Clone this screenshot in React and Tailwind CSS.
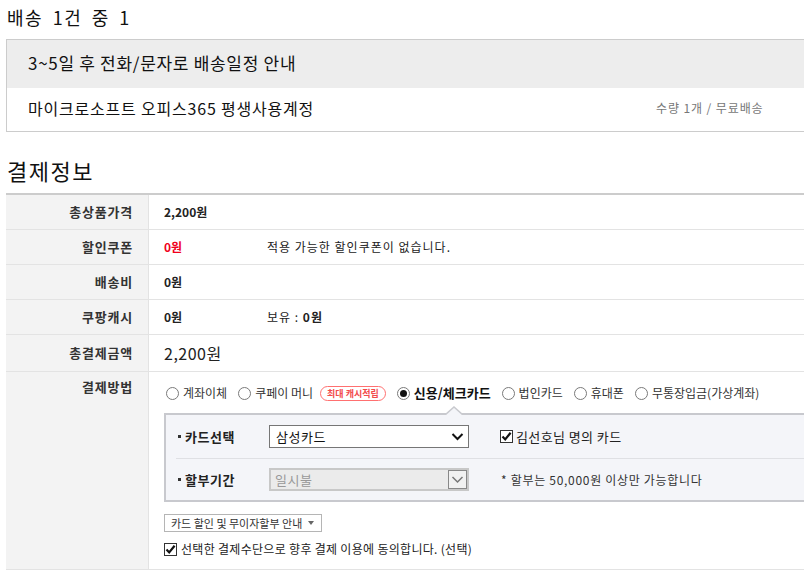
import React from 'react';

const font = { fontFamily: '"Noto Sans CJK KR", "Noto Sans", sans-serif' };

function Radio({ checked }) {
    return (
        <span className="w-[13px] h-[13px] rounded-full border border-[#7a7a7a] bg-white flex items-center justify-center shrink-0">
            {checked && <span className="w-[7px] h-[7px] rounded-full bg-[#111]" />}
        </span>
    );
}

function CheckBox() {
    return (
        <span className="w-[13px] h-[13px] border border-[#333] bg-white flex items-center justify-center shrink-0">
            <svg width="11" height="11" viewBox="0 0 11 11">
                <path d="M1.5 5.5 L4.2 8.4 L9.6 1.8" fill="none" stroke="#111" strokeWidth="2.2" />
            </svg>
        </span>
    );
}

function Chevron({ color = '#111', width = 2 }) {
    return (
        <svg width="13" height="9" viewBox="0 0 13 9">
            <path d="M1.5 2 L6.5 7 L11.5 2" fill="none" stroke={color} strokeWidth={width} />
        </svg>
    );
}

const rows = [
    { label: '총상품가격', value: <span className="font-bold">2,200원</span> },
    {
        label: '할인쿠폰',
        value: <span className="font-bold text-[#f0001c]">0원</span>,
        extra: <span className="tracking-[1px]">적용 가능한 할인쿠폰이 없습니다.</span>,
    },
    { label: '배송비', value: <span className="font-bold">0원</span> },
    {
        label: '쿠팡캐시',
        value: <span className="font-bold">0원</span>,
        extra: <span className="tracking-[1px]">보유 : <b>0원</b></span>,
    },
];

const labelCls = 'w-[143px] bg-[#f3f3f3] border-r border-[#e3e3e3] flex justify-end pr-[15px] text-[13px] font-bold text-[#333] tracking-[0.8px]';

export default function App() {
    const methods = [
        { name: '계좌이체' },
        { name: '쿠페이 머니', badge: true },
        { name: '신용/체크카드', checked: true },
        { name: '법인카드' },
        { name: '휴대폰' },
        { name: '무통장입금(가상계좌)' },
    ];

    return (
        <div className="w-[804px] h-[580px] overflow-hidden bg-white text-[#222]" style={font}>
            <div className="w-[840px]">
                <h2 className="h-[39px] pl-[7px] pt-[5px] text-[18px] leading-[24px] font-normal text-[#111] tracking-[1.5px] [word-spacing:4px]">배송 1건 중 1</h2>

                <div className="ml-[6px] border border-[#cccccc]">
                    <div className="h-[48px] bg-[#ededed] pl-[21px] pb-[3px] flex items-center text-[17px] text-[#111] tracking-[0.7px]">
                        3~5일 후 전화/문자로 배송일정 안내
                    </div>
                    <div className="h-[43px] pl-[21px] pb-[4px] flex items-center">
                        <span className="w-[628px] text-[16px] text-[#111] tracking-[0.8px]">마이크로소프트 오피스365 평생사용계정</span>
                        <span className="text-[12px] text-[#777] tracking-[0.9px]">수량 1개 / 무료배송</span>
                    </div>
                </div>

                <h2 className="h-[61px] pl-[7px] pt-[24px] text-[22px] leading-[28px] font-normal text-[#111] tracking-[1.5px]">결제정보</h2>

                <div className="ml-[6px] border-t-2 border-[#cccccc] text-[12px]">
                    {rows.map((r) => (
                        <div key={r.label} className="flex h-[35px] border-b border-[#e3e3e3]">
                            <div className={labelCls + ' items-center'}>{r.label}</div>
                            <div className="flex items-center pl-[15px]">
                                <span className="w-[103px]">{r.value}</span>
                                {r.extra}
                            </div>
                        </div>
                    ))}
                    <div className="flex h-[37px] border-b border-[#e3e3e3]">
                        <div className={labelCls + ' items-center'}>총결제금액</div>
                        <div className="flex items-center pl-[15px] text-[16px] text-[#222] tracking-[0.5px]">2,200원</div>
                    </div>

                    <div className="flex h-[198px] border-b border-[#e3e3e3]">
                        <div className={labelCls + ' pt-[6px] leading-[18px]'}>결제방법</div>
                        <div className="flex-1 pl-[15px]">
                            <div className="mt-[13px] h-[16px] flex items-center pl-[2px]">
                                {methods.map((m) => (
                                    <label key={m.name} className="flex items-center gap-[4px] mr-[11px]">
                                        <Radio checked={m.checked} />
                                        <span className={m.checked ? 'font-bold text-[13px] text-[#111]' : 'text-[12px] text-[#333]'}>{m.name}</span>
                                        {m.badge && (
                                            <span className="ml-[3px] h-[15px] px-[6px] rounded-full border border-[#ff7070] text-[#f24b4b] text-[9px] font-bold flex items-center leading-none">
                                                최대 캐시적립
                                            </span>
                                        )}
                                    </label>
                                ))}
                            </div>

                            <div className="relative mt-[12px] border-y-2 border-l-2 border-[#c8c9ce] bg-[#f4f5f9]">
                                <svg className="absolute left-[279px] -top-[9px]" width="18" height="9" viewBox="0 0 18 9">
                                    <path d="M0 9 L9 1 L18 9" fill="#f4f5f9" stroke="#c8c9ce" strokeWidth="1.5" />
                                </svg>
                                <div className="h-[43px] flex items-center pl-[12px]">
                                    <span className="w-[3px] h-[3px] bg-[#333] mr-[4px]" />
                                    <span className="w-[84px] text-[13px] font-bold text-[#222] tracking-[0.5px]">카드선택</span>
                                    <div className="w-[200px] h-[23px] border border-[#767676] bg-white flex items-center justify-between pl-[6px] pr-[4px]">
                                        <span className="text-[13px] text-[#111] tracking-[0.5px]">삼성카드</span>
                                        <Chevron />
                                    </div>
                                    <span className="ml-[31px] flex items-center gap-[3px]">
                                        <CheckBox />
                                        <span className="text-[13px] text-[#222] tracking-[0.4px]">김선호님 명의 카드</span>
                                    </span>
                                </div>
                                <div className="ml-[10px] h-px bg-[#dfe0e4]" />
                                <div className="h-[41px] flex items-center pl-[12px]">
                                    <span className="w-[3px] h-[3px] bg-[#333] mr-[4px]" />
                                    <span className="w-[84px] text-[13px] font-bold text-[#222] tracking-[0.5px]">할부기간</span>
                                    <div className="w-[200px] h-[23px] border-2 border-[#c8c8c8] bg-[#ebebeb] flex items-center justify-between pl-[4px]">
                                        <span className="text-[13px] text-[#999] tracking-[0.5px]">일시불</span>
                                        <span className="w-[19px] h-[19px] border border-[#888] bg-[#f1f1f1] flex items-center justify-center">
                                            <Chevron color="#777" width={1.5} />
                                        </span>
                                    </div>
                                    <span className="ml-[32px] text-[12px] text-[#333] tracking-[0.7px]">* 할부는 50,000원 이상만 가능합니다</span>
                                </div>
                            </div>

                            <div className="mt-[12px] inline-flex items-center h-[18px] border border-[#b5b5b5] pl-[6px] pr-[7px] gap-[6px] text-[11px] text-[#333]">
                                카드 할인 및 무이자할부 안내
                                <span className="w-0 h-0 border-x-[3px] border-x-transparent border-t-[4px] border-t-[#666]" />
                            </div>

                            <div className="mt-[9px] h-[16px] flex items-center gap-[4px]">
                                <CheckBox />
                                <span className="text-[12px] text-[#222] tracking-[0.3px]">선택한 결제수단으로 향후 결제 이용에 동의합니다. (선택)</span>
                            </div>
                        </div>
                    </div>
                </div>
            </div>
        </div>
    );
}
